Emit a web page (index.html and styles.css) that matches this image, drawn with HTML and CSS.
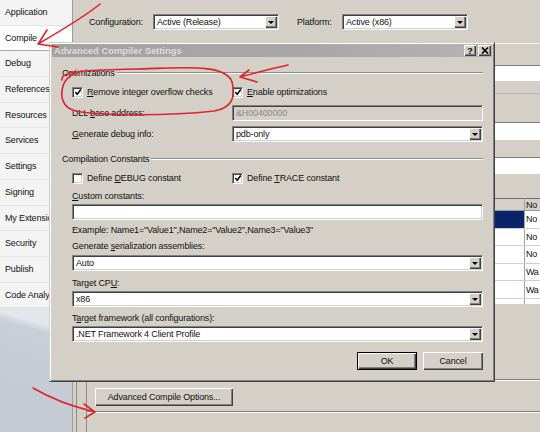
FILE: index.html
```html
<!DOCTYPE html>
<html lang="en">
<head>
  <meta charset="UTF-8">
  <title>Compile</title>
  <link rel="stylesheet" href="styles.css">
</head>
<body>

  <div class="ide">
    <nav class="side">
      <ul class="tabs">
        <li>Application</li>
        <li class="current">Compile</li>
        <li>Debug</li>
        <li>References</li>
        <li>Resources</li>
        <li>Services</li>
        <li>Settings</li>
        <li>Signing</li>
        <li>My Extensions</li>
        <li>Security</li>
        <li>Publish</li>
        <li>Code Analysis</li>
      </ul>
      <div class="side-fill"></div>
    </nav>

    <div class="page">
      <div class="config-row">
        <span class="cfg-label">Configuration:</span>
        <div class="combo combo-top combo-config"><span class="val">Active (Release)</span><span class="drop"></span></div>
        <span class="cfg-label cfg-platform">Platform:</span>
        <div class="combo combo-top combo-platform"><span class="val">Active (x86)</span><span class="drop"></span></div>
      </div>

      <!-- compile page fields, mostly hidden by the dialog -->
      <div class="rule-light"></div>
      <div class="bg-box box-output"></div>
      <div class="rule-faint"></div>
      <div class="bg-box box-path"></div>
      <div class="bg-box box-options"></div>

      <div class="grid-wrap">
        <table class="grid">
          <tr><th></th><th>No</th></tr>
          <tr class="selected"><td></td><td>No</td></tr>
          <tr><td></td><td>No</td></tr>
          <tr><td></td><td>No</td></tr>
          <tr><td></td><td>Wa</td></tr>
          <tr><td></td><td>Wa</td></tr>
          <tr><td></td><td>Wa</td></tr>
        </table>
      </div>

      <div class="page-foot">
        <div class="foot-box">
          <div class="rule-etched"></div>
          <button class="btn btn-advanced">Advanced Compile Options...</button>
          <div class="rule-etched rule-low"></div>
        </div>
      </div>
    </div>
  </div>

  <div class="dialog">
    <div class="titlebar">
      <span class="title">Advanced Compiler Settings</span>
      <span class="cap-btn cap-help">?</span>
      <span class="cap-btn cap-close">
        <svg width="8" height="7" viewBox="0 0 8 7"><path d="M1 0.5 L7 6.5 M7 0.5 L1 6.5" stroke="#000" stroke-width="1.6"/></svg>
      </span>
    </div>

    <div class="dlg-body">
      <div class="group-head">Optimizations</div>
      <div class="group-body">
        <div class="form-row row-checks">
          <label class="check">
            <span class="box"><svg width="9" height="9" viewBox="0 0 9 9"><path d="M1.5 4 L3.6 6.4 L7.6 1.2" fill="none" stroke="#000" stroke-width="1.7"/></svg></span>
            <span><u>R</u>emove integer overflow checks</span>
          </label>
          <label class="check">
            <span class="box"><svg width="9" height="9" viewBox="0 0 9 9"><path d="M1.5 4 L3.6 6.4 L7.6 1.2" fill="none" stroke="#000" stroke-width="1.7"/></svg></span>
            <span><u>E</u>nable optimizations</span>
          </label>
        </div>
        <div class="form-row row-dll">
          <span class="lbl">DLL <u>b</u>ase address:</span>
          <div class="field field-disabled">&amp;H00400000</div>
        </div>
        <div class="form-row row-debug">
          <span class="lbl"><u>G</u>enerate debug info:</span>
          <div class="combo"><span class="val">pdb-only</span><span class="drop"></span></div>
        </div>
      </div>

      <div class="group-head head-constants">Compilation Constants</div>
      <div class="group-body">
        <div class="form-row row-checks">
          <label class="check">
            <span class="box"></span>
            <span>Define <u>D</u>EBUG constant</span>
          </label>
          <label class="check">
            <span class="box"><svg width="9" height="9" viewBox="0 0 9 9"><path d="M1.5 4 L3.6 6.4 L7.6 1.2" fill="none" stroke="#000" stroke-width="1.7"/></svg></span>
            <span>Define <u>T</u>RACE constant</span>
          </label>
        </div>
        <div class="lbl lbl-custom"><u>C</u>ustom constants:</div>
        <div class="field field-custom"></div>
        <div class="lbl lbl-example">Example: Name1="Value1",Name2="Value2",Name3="Value3"</div>
        <div class="lbl lbl-serial">Generate <u>s</u>erialization assemblies:</div>
        <div class="combo combo-serial"><span class="val">Auto</span><span class="drop"></span></div>
        <div class="lbl lbl-cpu">Target CP<u>U</u>:</div>
        <div class="combo combo-cpu"><span class="val">x86</span><span class="drop"></span></div>
        <div class="lbl lbl-framework">T<u>a</u>rget framework (all configurations):</div>
        <div class="combo combo-framework"><span class="val">.NET Framework 4 Client Profile</span><span class="drop"></span></div>

        <div class="dlg-buttons">
          <button class="btn btn-default">OK</button>
          <button class="btn">Cancel</button>
        </div>
      </div>
    </div>
  </div>

  <!-- hand drawn markers on top of the window -->
  <svg class="ink" width="540" height="432" viewBox="0 0 540 432">
    <g fill="none" stroke="#e0232c" stroke-width="1.6" stroke-linecap="round" stroke-linejoin="round">
      <path d="M100 4 C88 14 62 30 38 44 M38 44 L47 30 M38 44 L58 47"/>
      <path d="M62 80 C60 70 95 70 135 69 C180 68 226 63 232 82 C236 97 232 108 214 111 C170 116 102 116 76 111 C62 108 60 96 63 86 C65 79 72 73 82 71"/>
      <path d="M288 65 C270 69 255 73 240 77 M240 77 L249 70 M240 77 L257 82"/>
      <path d="M33 388 C50 398 70 406 95 412 M84 404 L95 412 L85 418"/>
    </g>
  </svg>

</body>
</html>
```

FILE: styles.css
```css
body {
  margin: 0;
  width: 540px;
  height: 432px;
  overflow: hidden;
  position: relative;
  font-family: "Liberation Sans", Arial, sans-serif;
  font-size: 9px;
  letter-spacing: -0.15px;
  color: #111;
  background: #d4d0c8;
}

u {
  text-decoration: underline;
  text-underline-offset: 1px;
}

/* ---------- project properties window ---------- */

.ide {
  display: flex;
  height: 432px;
}

.side {
  width: 72px;
  display: flex;
  flex-direction: column;
  border-right: 1px solid #9c9c9c;
}

.tabs {
  margin: 0;
  padding: 0;
  list-style: none;
  background: #f4f4f4;
}

.tabs li {
  height: 25.7px;
  box-sizing: border-box;
  line-height: 25px;
  padding-left: 5px;
  white-space: nowrap;
  overflow: hidden;
  border-bottom: 1px solid #e4e4e4;
}

.tabs li.current {
  background: #fff;
  border-bottom-color: #a8a8a8;
}

.side-fill {
  flex: 1;
  background: linear-gradient(197deg, #e3e7ec 24px, #c8cfd9 32px, #c2c9d3 100%);
}

.page {
  flex: 1;
  min-width: 0;
  display: flex;
  flex-direction: column;
  overflow: hidden;
  background: #d4d0c8;
}

.config-row {
  height: 42px;
  box-sizing: border-box;
  padding: 14px 0 0 16px;
  display: flex;
  align-items: flex-start;
}

.cfg-label {
  line-height: 17px;
  width: 64px;
}

.cfg-platform {
  margin-left: 18px;
  width: 45px;
}

.combo-top {
  height: 17px;
  width: 126px;
}

.rule-light {
  margin-top: 1px;
  height: 1px;
  background: #f4f3f0;
}

.bg-box {
  margin-left: 361px;
  background: #fff;
  border-top: 1px solid #7c7c7c;
}

.box-output {
  margin-top: 21px;
  height: 15px;
}

.rule-faint {
  margin-top: 12px;
  height: 1px;
  background: #bcb8b0;
}

.box-path {
  margin-top: 28px;
  height: 17px;
}

.box-options {
  margin-top: 17px;
  height: 16px;
}

.grid-wrap {
  margin: 24px 0 0 362px;
  height: 106px;
  overflow: hidden;
}

.grid {
  border-collapse: collapse;
  background: #fff;
  width: 120px;
}

.grid th,
.grid td {
  padding: 0 0 0 1px;
  text-align: left;
  font-weight: normal;
  letter-spacing: -0.3px;
  white-space: nowrap;
  border-bottom: 1px solid #cfcfcf;
}

.grid th {
  height: 11px;
  background: #d4d0c8;
  border-top: 1px solid #6e6e6e;
  border-bottom-color: #9a9a9a;
}

.grid td {
  height: 16.6px;
}

.grid th:first-child,
.grid td:first-child {
  width: 88px;
  border-right: 1px solid #a4a4a4;
}

.grid tr.selected td:first-child {
  background: #0a246a;
}

.page-foot {
  flex: 1;
  margin-left: 3px;
  border-left: 1px solid #8c8c8c;
}

.foot-box {
  margin: 75px 0 0 9px;
  height: 100%;
  border-left: 1px solid #8c8c8c;
  padding-left: 8px;
}

.rule-etched {
  margin-left: -8px;
  height: 1px;
  background: #808080;
  border-bottom: 1px solid #fff;
}

.rule-low {
  margin-top: 5px;
}

.btn-advanced {
  margin-top: 7px;
  width: 138px;
  height: 18px;
}

/* ---------- classic controls ---------- */

.btn {
  display: block;
  box-sizing: border-box;
  font: inherit;
  letter-spacing: inherit;
  color: #111;
  padding: 0;
  background: #d4d0c8;
  border: none;
  box-shadow: inset 1px 1px #fff, inset -1px -1px #404040, inset -2px -2px #808080;
}

.btn-default {
  border: 1px solid #000;
}

.combo {
  display: flex;
  box-sizing: border-box;
  height: 16px;
  background: #fff;
  border: 1px solid;
  border-color: #808080 #fff #fff #808080;
  box-shadow: inset 1px 1px #404040, inset -1px -1px #d4d0c8;
  padding: 1px;
}

.combo .val {
  flex: 1;
  padding-left: 2px;
  line-height: 12px;
  white-space: nowrap;
}

.combo-top .val {
  line-height: 13px;
}

.drop {
  width: 12px;
  background: #d4d0c8;
  box-shadow: inset 1px 1px #fff, inset -1px -1px #404040, inset -2px -2px #808080;
  display: flex;
  align-items: center;
  justify-content: center;
}

.drop::after {
  content: "";
  border-left: 3px solid transparent;
  border-right: 3px solid transparent;
  border-top: 3px solid #000;
}

.field {
  box-sizing: border-box;
  height: 16px;
  background: #fff;
  border: 1px solid;
  border-color: #808080 #fff #fff #808080;
  box-shadow: inset 1px 1px #404040, inset -1px -1px #d4d0c8;
  padding-left: 3px;
  line-height: 14px;
}

.field-disabled {
  background: #d4d0c8;
  color: #8a8a8a;
}

/* ---------- dialog ---------- */

.dialog {
  position: absolute;
  left: 49px;
  top: 42px;
  width: 446px;
  height: 340px;
  box-sizing: border-box;
  background: #d4d0c8;
  border: 1px solid;
  border-color: #d4d0c8 #404040 #404040 #d4d0c8;
  box-shadow: inset 1px 1px #fff, inset -1px -1px #808080;
  padding: 1px 2px 2px 2px;
}

.titlebar {
  height: 13px;
  display: flex;
  align-items: center;
  background: linear-gradient(to right, #a2a2a2, #a8a8a8 60%, #b4b4b4);
  padding-right: 1px;
}

.title {
  flex: 1;
  padding-left: 2px;
  font-weight: bold;
  font-size: 9.4px;
  letter-spacing: 0;
  color: #dedcd8;
}

.cap-btn {
  width: 12px;
  height: 11px;
  box-sizing: border-box;
  background: #d4d0c8;
  box-shadow: inset 1px 1px #fff, inset -1px -1px #404040, inset -2px -2px #808080;
  display: flex;
  align-items: center;
  justify-content: center;
  font-weight: bold;
  font-size: 9px;
  color: #000;
}

.cap-close {
  width: 13px;
  margin-left: 2px;
}

.dlg-body {
  padding: 0 9px 0 10px;
}

.group-head {
  margin-top: 9px;
  height: 14px;
  display: flex;
  align-items: center;
  white-space: nowrap;
}

.group-head::after {
  content: "";
  flex: 1;
  margin-left: 2px;
  height: 0;
  border-top: 1px solid #8c8c8c;
  border-bottom: 1px solid #fff;
}

.head-constants {
  margin-top: 10px;
}

.group-body {
  padding-left: 10px;
  display: flex;
  flex-direction: column;
}

.form-row {
  display: grid;
  grid-template-columns: 160px 1fr;
  align-items: center;
}

.row-checks {
  margin-top: 5px;
  height: 14px;
}

.row-dll {
  margin-top: 6px;
  height: 16px;
}

.row-debug {
  margin-top: 5px;
  height: 16px;
}

.check {
  display: flex;
  align-items: center;
  white-space: nowrap;
}

.box {
  width: 11px;
  height: 11px;
  box-sizing: border-box;
  margin-right: 4px;
  background: #fff;
  border: 1px solid;
  border-color: #808080 #fff #fff #808080;
  box-shadow: inset 1px 1px #404040, inset -1px -1px #d4d0c8;
  display: flex;
  align-items: center;
  justify-content: center;
}

.box svg {
  margin-left: 1px;
  margin-top: 1px;
}

.lbl {
  line-height: 14px;
  white-space: nowrap;
}

.lbl-custom {
  margin-top: 4px;
}

.field-custom {
  margin-top: 1px;
}

.lbl-example {
  margin-top: 3px;
}

.lbl-serial {
  margin-top: 2px;
}

.combo-serial {
  margin-top: 2px;
}

.lbl-cpu {
  margin-top: 5px;
}

.combo-cpu,
.combo-framework {
  margin-top: 1px;
}

.lbl-framework {
  margin-top: 4px;
}

.dlg-buttons {
  margin-top: 10px;
  display: flex;
  justify-content: flex-end;
  gap: 6px;
}

.dlg-buttons .btn {
  width: 60px;
  height: 18px;
}

/* ---------- red pen ---------- */

.ink {
  position: absolute;
  left: 0;
  top: 0;
  pointer-events: none;
}
```
